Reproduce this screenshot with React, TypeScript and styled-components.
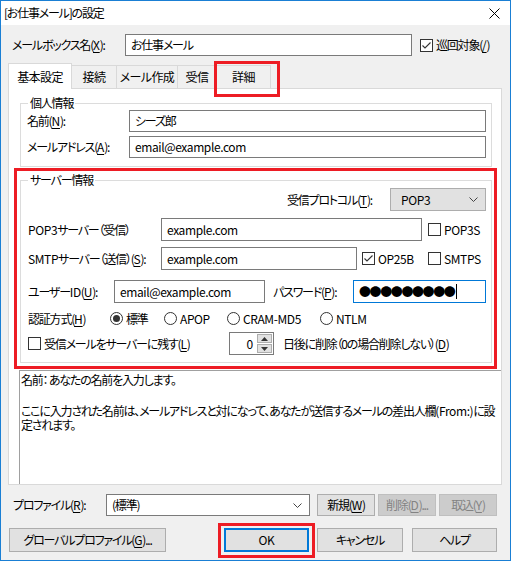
import styled, { createGlobalStyle } from 'styled-components'
import { FC, ReactNode } from 'react'

const GlobalStyle = createGlobalStyle`
  html, body {
    margin: 0;
    padding: 0;
    background: #fff;
  }
  body {
    font-family: "Noto Sans CJK JP", "Noto Sans", sans-serif;
    font-size: 12px;
    color: #000;
    font-feature-settings: "palt" 1;
    letter-spacing: -1.2px;
  }
  * {
    box-sizing: border-box;
  }
`

const Key: FC<{ children: ReactNode }> = ({ children }) => <Mnemonic>{children}</Mnemonic>

const CheckBox: FC<{ checked?: boolean }> = ({ checked }) => (
  <CheckSquare>
    {checked && (
      <svg width="11" height="11" viewBox="0 0 11 11">
        <path d="M1.5 5.5 L4 8 L9.5 2.5" fill="none" stroke="#333" strokeWidth="1.1" />
      </svg>
    )}
  </CheckSquare>
)

const Radio: FC<{ checked?: boolean }> = ({ checked }) => (
  <RadioCircle>{checked && <RadioDot />}</RadioCircle>
)

const Chevron = () => (
  <svg width="9" height="5" viewBox="0 0 9 5">
    <path d="M0.5 0.5 L4.5 4.5 L8.5 0.5" fill="none" stroke="#444" strokeWidth="1" />
  </svg>
)

const App = () => {
  return (
    <>
      <GlobalStyle />
      <Window>
        <TitleBar>
          <span>[お仕事メール]の設定</span>
          <CloseGlyph width="11" height="11" viewBox="0 0 11 11">
            <path d="M0.5 0.5 L10.5 10.5 M10.5 0.5 L0.5 10.5" stroke="#000" strokeWidth="1" />
          </CloseGlyph>
        </TitleBar>

        <Body>
          <MailboxRow>
            <Label $w={113}>
              メールボックス名(<Key>X</Key>):
            </Label>
            <TextBox $w={287} $h={22}>お仕事メール</TextBox>
            <CheckItem $gap={8}>
              <CheckBox checked />
              <span>
                巡回対象(<Key>/</Key>)
              </span>
            </CheckItem>
          </MailboxRow>

          <TabStrip>
            <Tab $w={64} $active>基本設定</Tab>
            <Tab $w={46}>接続</Tab>
            <Tab $w={62}>メール作成</Tab>
            <Tab $w={40}>受信</Tab>
            <Tab $w={55} $marked>詳細</Tab>
          </TabStrip>

          <Panel>
            <Group $top={7}>
              <Legend>個人情報</Legend>
              <FieldRow $pad={6}>
                <Label $w={102}>
                  名前(<Key>N</Key>):
                </Label>
                <TextBox $h={22} $grow>シーズ郎</TextBox>
              </FieldRow>
              <FieldRow $pad={6} $top={4}>
                <Label $w={102}>
                  メールアドレス(<Key>A</Key>):
                </Label>
                <TextBox $h={22} $grow>
                  <Lat>email@example.com</Lat>
                </TextBox>
              </FieldRow>
            </Group>

            <Marked>
              <Group $top={0} $inner>
                <Legend>サーバー情報</Legend>
                <ProtocolRow>
                  <span>
                    受信プロトコル(<Key>T</Key>):
                  </span>
                  <Combo $w={96} $h={23} $filled>
                    <Lat>POP3</Lat>
                    <Chevron />
                  </Combo>
                </ProtocolRow>

                <FieldRow $pad={7} $top={7}>
                  <Label $w={133}>
                    <Lat>POP3</Lat>サーバー（受信）
                  </Label>
                  <TextBox $w={261} $h={23}>
                    <Lat>example.com</Lat>
                  </TextBox>
                  <CheckItem $gap={6}>
                    <CheckBox />
                    <Lat>POP3S</Lat>
                  </CheckItem>
                </FieldRow>

                <FieldRow $pad={7} $top={6}>
                  <Label $w={133}>
                    <Lat>SMTP</Lat>サーバー（送信）(<Key>S</Key>):
                  </Label>
                  <TextBox $w={196} $h={23}>
                    <Lat>example.com</Lat>
                  </TextBox>
                  <CheckItem $gap={5} $w={66}>
                    <CheckBox checked />
                    <Lat>OP25B</Lat>
                  </CheckItem>
                  <CheckItem>
                    <CheckBox />
                    <Lat>SMTPS</Lat>
                  </CheckItem>
                </FieldRow>

                <FieldRow $pad={7} $top={10}>
                  <Label $w={86}>
                    ユーザー<Lat>ID</Lat>(<Key>U</Key>):
                  </Label>
                  <TextBox $w={151} $h={23}>
                    <Lat>email@example.com</Lat>
                  </TextBox>
                  <Label $w={80} $gap={8}>
                    パスワード(<Key>P</Key>):
                  </Label>
                  <TextBox $w={133} $h={23} $focused>
                    <Dots>●●●●●●●●●</Dots>
                    <Caret />
                  </TextBox>
                </FieldRow>

                <FieldRow $pad={7} $top={6} $h={19}>
                  <Label $w={82}>
                    認証方式(<Key>H</Key>)
                  </Label>
                  <RadioItem $w={54}>
                    <Radio checked />
                    <span>標準</span>
                  </RadioItem>
                  <RadioItem $w={63}>
                    <Radio />
                    <Lat>APOP</Lat>
                  </RadioItem>
                  <RadioItem $w={93}>
                    <Radio />
                    <Lat>CRAM-MD5</Lat>
                  </RadioItem>
                  <RadioItem>
                    <Radio />
                    <Lat>NTLM</Lat>
                  </RadioItem>
                </FieldRow>

                <FieldRow $pad={7} $top={4}>
                  <CheckItem $w={201}>
                    <CheckBox />
                    <span>
                      受信メールをサーバーに残す(<Key>L</Key>)
                    </span>
                  </CheckItem>
                  <Spin>
                    <SpinValue>0</SpinValue>
                    <SpinButtons>
                      <SpinButton>
                        <svg width="7" height="4" viewBox="0 0 7 4">
                          <path d="M0 4 L3.5 0 L7 4 Z" fill="#333" />
                        </svg>
                      </SpinButton>
                      <SpinButton>
                        <svg width="7" height="4" viewBox="0 0 7 4">
                          <path d="M0 0 L3.5 4 L7 0 Z" fill="#333" />
                        </svg>
                      </SpinButton>
                    </SpinButtons>
                  </Spin>
                  <Label $gap={9}>
                    日後に削除（0の場合削除しない）(<Key>D</Key>)
                  </Label>
                </FieldRow>
              </Group>
            </Marked>

            <HelpBox>
              <HelpLine>名前： あなたの名前を入力します。</HelpLine>
              <HelpGap />
              <HelpLine>
                ここに入力された名前は、メールアドレスと対になって、あなたが送信するメールの差出人欄<Lat>(From:)</Lat>に設
              </HelpLine>
              <HelpLine>定されます。</HelpLine>
            </HelpBox>
          </Panel>

          <ProfileRow>
            <Label $w={93}>
              プロファイル(<Key>R</Key>):
            </Label>
            <Combo $w={204} $h={22}>
              <span>(標準)</span>
              <Chevron />
            </Combo>
            <Buttons>
              <Button $w={58} $h={22}>
                新規(<Key>W</Key>)
              </Button>
              <Button $w={58} $h={22} $disabled>
                削除(<Key>D</Key>)...
              </Button>
              <Button $w={58} $h={22} $disabled>
                取込(<Key>Y</Key>)
              </Button>
            </Buttons>
          </ProfileRow>

          <FooterRow>
            <Button $w={157} $h={24}>
              グローバルプロファイル(<Key>G</Key>)...
            </Button>
            <MarkedButton>
              <Button $w={85} $h={24} $default>
                <Lat>OK</Lat>
              </Button>
            </MarkedButton>
            <Button $w={86} $h={24} $gap={8}>
              キャンセル
            </Button>
            <Button $w={85} $h={24} $gap={9}>
              ヘルプ
            </Button>
          </FooterRow>
        </Body>
      </Window>
    </>
  )
}

const Window = styled.div`
  width: 511px;
  height: 561px;
  border: 1px solid #1a7fd4;
  display: flex;
  flex-direction: column;
  background: #f0f0f0;
  overflow: hidden;
`

const TitleBar = styled.div`
  height: 24px;
  flex-shrink: 0;
  background: #fff;
  display: flex;
  align-items: center;
  justify-content: space-between;
  padding: 0 10px 0 3px;
  line-height: 16px;
`

const CloseGlyph = styled.svg`
  display: block;
`

const Body = styled.div`
  flex: 1;
  display: flex;
  flex-direction: column;
  line-height: 16px;
`

// latin runs keep close to their natural width
const Lat = styled.span`
  letter-spacing: -0.4px;
`

const Mnemonic = styled.span`
  text-decoration: underline;
  text-underline-offset: 2px;
  letter-spacing: -0.2px;
`

const Label = styled.span<{ $w?: number; $gap?: number }>`
  flex-shrink: 0;
  white-space: nowrap;
  width: ${(p) => (p.$w ? `${p.$w}px` : 'auto')};
  margin-left: ${(p) => p.$gap ?? 0}px;
`

const TextBox = styled.div<{ $w?: number; $h: number; $grow?: boolean; $focused?: boolean }>`
  flex-shrink: 0;
  ${(p) => (p.$grow ? 'flex: 1;' : `width: ${p.$w}px;`)}
  height: ${(p) => p.$h}px;
  border: 1px solid ${(p) => (p.$focused ? '#0078d7' : '#7a7a7a')};
  background: #fff;
  padding: 0 5px;
  display: flex;
  align-items: center;
  white-space: nowrap;
  overflow: hidden;
`

const Dots = styled.span`
  font-size: 12px;
  letter-spacing: -1.4px;
  line-height: 14px;
`

const Caret = styled.span`
  width: 1px;
  height: 15px;
  margin-left: 2px;
  background: #000;
`

const CheckItem = styled.div<{ $gap?: number; $w?: number }>`
  display: flex;
  align-items: center;
  gap: 3px;
  flex-shrink: 0;
  white-space: nowrap;
  margin-left: ${(p) => p.$gap ?? 0}px;
  ${(p) => (p.$w ? `width: ${p.$w}px;` : '')}
`

const CheckSquare = styled.span`
  width: 13px;
  height: 13px;
  border: 1px solid #333;
  background: #fff;
  display: flex;
  align-items: center;
  justify-content: center;
  flex-shrink: 0;
`

const RadioItem = styled.div<{ $w?: number }>`
  display: flex;
  align-items: center;
  gap: 3px;
  flex-shrink: 0;
  white-space: nowrap;
  ${(p) => (p.$w ? `width: ${p.$w}px;` : '')}
`

const RadioCircle = styled.span`
  width: 13px;
  height: 13px;
  border: 1px solid #333;
  border-radius: 50%;
  background: #fff;
  display: flex;
  align-items: center;
  justify-content: center;
  flex-shrink: 0;
`

const RadioDot = styled.span`
  width: 7px;
  height: 7px;
  border-radius: 50%;
  background: #333;
`

const MailboxRow = styled.div`
  display: flex;
  align-items: center;
  height: 22px;
  margin-top: 9px;
  padding-left: 11px;
`

const TabStrip = styled.div`
  display: flex;
  align-items: flex-end;
  height: 25px;
  margin: 7px 0 0 7px;
`

const Tab = styled.div<{ $w: number; $active?: boolean; $marked?: boolean }>`
  position: relative;
  width: ${(p) => p.$w}px;
  height: ${(p) => (p.$active ? 26 : 23)}px;
  margin-bottom: ${(p) => (p.$active ? -1 : 0)}px;
  margin-left: -1px;
  z-index: ${(p) => (p.$active ? 1 : 'auto')};
  background: ${(p) => (p.$active ? '#fff' : '#f0f0f0')};
  border: 1px solid #d9d9d9;
  border-bottom: none;
  display: flex;
  align-items: center;
  justify-content: center;
  white-space: nowrap;
  letter-spacing: -0.6px;
  &:first-child {
    margin-left: 0;
  }
  ${(p) =>
    p.$marked
      ? `
    &::after {
      content: '';
      position: absolute;
      left: -3px;
      right: -10px;
      top: -5px;
      bottom: -9px;
      border: 3px solid #ed1c24;
      z-index: 3;
    }
  `
      : ''}
`

const Panel = styled.div`
  height: 397px;
  margin: 0 8px 0 7px;
  border: 1px solid #d9d9d9;
  background: #fff;
  display: flex;
  flex-direction: column;
`

const Group = styled.fieldset<{ $top: number; $inner?: boolean }>`
  border: 1px solid #dcdcdc;
  margin: ${(p) => (p.$inner ? '0' : `${p.$top}px 9px 0 11px`)};
  padding: 0 0 ${(p) => (p.$inner ? 7 : 8)}px 0;
  min-width: 0;
`

const Legend = styled.legend`
  margin-left: 7px;
  padding: 0 2px;
  line-height: 14px;
  height: 14px;
`

const FieldRow = styled.div<{ $pad: number; $top?: number; $h?: number }>`
  display: flex;
  align-items: center;
  padding: 0 5px 0 ${(p) => p.$pad}px;
  margin-top: ${(p) => p.$top ?? 0}px;
  ${(p) => (p.$h ? `height: ${p.$h}px;` : '')}
`

const ProtocolRow = styled.div`
  display: flex;
  align-items: center;
  justify-content: flex-end;
  gap: 18px;
  padding-right: 5px;
  margin-top: 1px;
`

const Combo = styled.div<{ $w: number; $h: number; $filled?: boolean }>`
  width: ${(p) => p.$w}px;
  height: ${(p) => p.$h}px;
  flex-shrink: 0;
  border: 1px solid ${(p) => (p.$filled ? '#adadad' : '#7a7a7a')};
  background: ${(p) => (p.$filled ? '#e1e1e1' : '#fff')};
  display: flex;
  align-items: center;
  justify-content: space-between;
  padding: 0 7px 0 ${(p) => (p.$filled ? 10 : 5)}px;
`

const Marked = styled.div`
  position: relative;
  margin: 1px 4px 0 5px;
  padding: 5px 5px 6px 6px;
  &::after {
    content: '';
    position: absolute;
    inset: 0;
    border: 3px solid #ed1c24;
    pointer-events: none;
  }
`

const Spin = styled.div`
  display: flex;
  width: 45px;
  height: 23px;
  flex-shrink: 0;
  border: 1px solid #7a7a7a;
  background: #fff;
`

const SpinValue = styled.div`
  flex: 1;
  text-align: right;
  padding-right: 5px;
  line-height: 21px;
`

const SpinButtons = styled.div`
  width: 16px;
  display: flex;
  flex-direction: column;
  gap: 1px;
  padding: 1px 1px 1px 0;
`

const SpinButton = styled.div`
  flex: 1;
  background: #e1e1e1;
  border: 1px solid #adadad;
  display: flex;
  align-items: center;
  justify-content: center;
`

const HelpBox = styled.div`
  flex: 1;
  margin: 1px 0 0 10px;
  border-top: 1px solid #a0a0a0;
  border-left: 1px solid #a0a0a0;
  padding: 2px 0 0 1px;
  overflow: hidden;
`

const HelpLine = styled.div`
  line-height: 14px;
  white-space: nowrap;
`

const HelpGap = styled.div`
  height: 17px;
`

const ProfileRow = styled.div`
  display: flex;
  align-items: center;
  margin-top: 9px;
  padding-left: 12px;
  height: 22px;
`

const Buttons = styled.div`
  display: flex;
  gap: 3px;
  margin-left: 7px;
`

const Button = styled.div<{ $w: number; $h: number; $disabled?: boolean; $default?: boolean; $gap?: number }>`
  width: ${(p) => p.$w}px;
  height: ${(p) => p.$h}px;
  flex-shrink: 0;
  margin-left: ${(p) => p.$gap ?? 0}px;
  background: ${(p) => (p.$disabled ? '#cccccc' : '#e1e1e1')};
  border: ${(p) => (p.$default ? '2px solid #0078d7' : `1px solid ${p.$disabled ? '#bfbfbf' : '#adadad'}`)};
  color: ${(p) => (p.$disabled ? '#838383' : '#000')};
  display: flex;
  align-items: center;
  justify-content: center;
  white-space: nowrap;
`

const FooterRow = styled.div`
  display: flex;
  align-items: center;
  margin-top: 12px;
  padding-left: 8px;
`

const MarkedButton = styled.div`
  position: relative;
  margin-left: 58px;
  &::after {
    content: '';
    position: absolute;
    left: -6px;
    right: -6px;
    top: -5px;
    bottom: -6px;
    border: 3px solid #ed1c24;
    pointer-events: none;
  }
`

export default App
